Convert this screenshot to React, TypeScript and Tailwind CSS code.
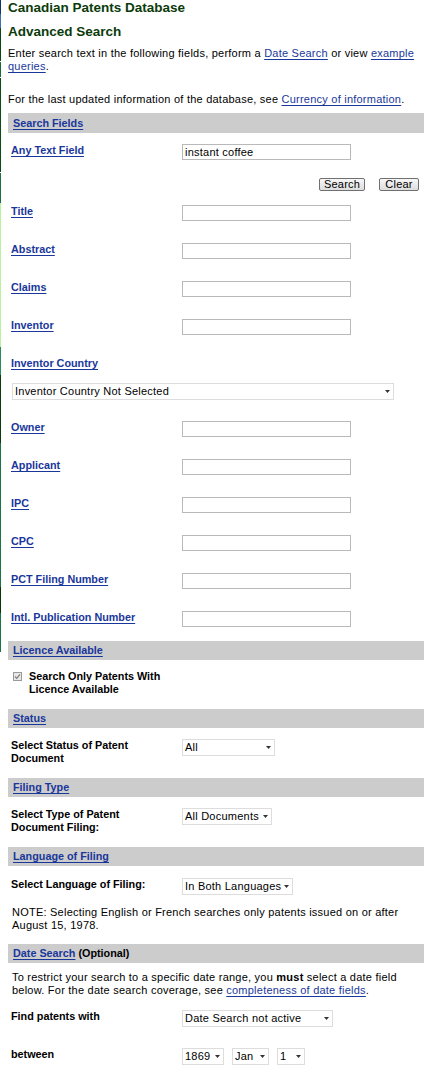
import type { ReactNode } from 'react';

const linkCls = 'text-[#19379b] underline underline-offset-[2px]';
const labelCls = 'text-[10.8px] leading-[13px] font-bold';
const bodyCls = 'text-[11px] leading-[13px] tracking-[0.23px]';

function Bar({ children, tall }: { children: ReactNode; tall?: boolean }) {
  return (
    <div
      className={`flex items-center bg-[#cccccc] pl-[5px] text-[10.8px] font-bold leading-[13px] ${
        tall ? 'h-[20px]' : 'h-[19px]'
      }`}
    >
      {children}
    </div>
  );
}

function Field({ label, h = 'h-[38px]', value }: { label: string; h?: string; value?: string }) {
  return (
    <div className={`flex items-start ${h}`}>
      <div className={`w-[174px] pl-[3px] ${labelCls}`}>
        <a href="#" className={linkCls}>
          {label}
        </a>
      </div>
      <div className={`flex h-[16px] w-[169px] items-center border border-[#b9b9b9] bg-white pl-[2px] ${bodyCls}`}>
        {value}
      </div>
    </div>
  );
}

function Select({ text, w }: { text: string; w: string }) {
  return (
    <div
      className={`flex h-[17px] ${w} items-center justify-between border border-[#dddddd] bg-white pl-[2px] pr-[3px] ${bodyCls}`}
    >
      <span className="whitespace-nowrap">{text}</span>
      <svg width="5" height="3" viewBox="0 0 5 3" className="shrink-0">
        <path d="M0 0h5L2.5 3z" fill="#333" />
      </svg>
    </div>
  );
}

function Stripe() {
  return (
    <div className="flex w-px shrink-0 flex-col">
      <div className="h-[14px] bg-[#0e3668]" />
      <div className="h-[14px] bg-[#3f6fa6]" />
      <div className="h-[33px] bg-[#0a4812]" />
      <div className="h-px bg-white" />
      <div className="h-[15px] bg-[#17683a]" />
      <div className="h-px bg-white" />
      <div className="h-[94px] bg-[#0b4a15]" />
      <div className="h-px bg-white" />
      <div className="h-[30px] bg-[#1b6e44]" />
      <div className="h-[144px] bg-[#b9f29a]" />
      <div className="h-[28px] bg-[#2b8a5a]" />
      <div className="h-[68px] bg-[#0a3d0c]" />
      <div className="h-[144px] bg-[#1a7448]" />
      <div className="h-[26px] bg-[#083408]" />
      <div className="h-[39px] bg-[#1a7448]" />
    </div>
  );
}

export default function App() {
  return (
    <div className="flex min-h-[1068px] w-[429px] bg-white font-['Liberation_Sans',Arial,sans-serif] text-black">
      <Stripe />
      <div className="w-[423px] pl-[7px]">
        <h1 className="text-[13.5px] font-bold leading-[16px] text-[#0b3b0b]">Canadian Patents Database</h1>
        <h2 className="mt-[8px] text-[13.5px] font-bold leading-[16px] text-[#0b3b0b]">Advanced Search</h2>
        <p className={`mt-[7px] ${bodyCls}`}>
          Enter search text in the following fields, perform a{' '}
          <a href="#" className={linkCls}>
            Date Search
          </a>{' '}
          or view{' '}
          <a href="#" className={linkCls}>
            example
            <br />
            queries
          </a>
          .
        </p>
        <p className={`mt-[20px] ${bodyCls}`}>
          For the last updated information of the database, see{' '}
          <a href="#" className={linkCls}>
            Currency of information
          </a>
          .
        </p>

        <div className="mt-[7px]">
          <Bar tall>
            <a href="#" className={linkCls}>
              Search Fields
            </a>
          </Bar>
        </div>

        <div className="pt-[11px]">
          <Field label="Any Text Field" h="h-[34px]" value="instant coffee" />
          <div className="flex h-[27px] items-start justify-end gap-[14px] pr-[5px]">
            <button className={`flex h-[13px] w-[46px] items-center justify-center rounded-[2px] border border-[#707070] bg-gradient-to-b from-[#f7f7f7] to-[#dddddd] ${bodyCls}`}>
              Search
            </button>
            <button className={`flex h-[13px] w-[40px] items-center justify-center rounded-[2px] border border-[#707070] bg-gradient-to-b from-[#f7f7f7] to-[#dddddd] ${bodyCls}`}>
              Clear
            </button>
          </div>
          <Field label="Title" />
          <Field label="Abstract" />
          <Field label="Claims" />
          <Field label="Inventor" />
          <div className={`h-[26px] pl-[3px] ${labelCls}`}>
            <a href="#" className={linkCls}>
              Inventor Country
            </a>
          </div>
          <div className="h-[38px] pl-[4px]">
            <Select text="Inventor Country Not Selected" w="w-[382px]" />
          </div>
          <Field label="Owner" />
          <Field label="Applicant" />
          <Field label="IPC" />
          <Field label="CPC" />
          <Field label="PCT Filing Number" />
          <Field label="Intl. Publication Number" h="h-[30px]" />
        </div>

        <Bar>
          <a href="#" className={linkCls}>
            Licence Available
          </a>
        </Bar>
        <div className="flex items-start gap-[7px] pb-[13px] pl-[5px] pt-[10px]">
          <svg width="9" height="9" viewBox="0 0 9 9" className="mt-[2px] shrink-0">
            <rect x="0.5" y="0.5" width="8" height="8" fill="#e8e8e8" stroke="#9a9a9a" />
            <path d="M2 4.5l1.8 1.8L7 2.3" fill="none" stroke="#7c7c7c" strokeWidth="1.2" />
          </svg>
          <div className={labelCls}>
            Search Only Patents With
            <br />
            Licence Available
          </div>
        </div>

        <Bar>
          <a href="#" className={linkCls}>
            Status
          </a>
        </Bar>
        <div className="flex items-start pb-[13px] pt-[11px]">
          <div className={`w-[174px] pl-[3px] ${labelCls}`}>
            Select Status of Patent
            <br />
            Document
          </div>
          <Select text="All" w="w-[93px]" />
        </div>

        <Bar>
          <a href="#" className={linkCls}>
            Filing Type
          </a>
        </Bar>
        <div className="flex items-start pb-[13px] pt-[11px]">
          <div className={`w-[174px] pl-[3px] ${labelCls}`}>
            Select Type of Patent
            <br />
            Document Filing:
          </div>
          <Select text="All Documents" w="w-[90px]" />
        </div>

        <Bar>
          <a href="#" className={linkCls}>
            Language of Filing
          </a>
        </Bar>
        <div className="pb-[12px] pt-[12px]">
          <div className="flex items-start">
            <div className={`w-[174px] pl-[3px] ${labelCls}`}>Select Language of Filing:</div>
            <Select text="In Both Languages" w="w-[111px]" />
          </div>
          <p className={`mt-[11px] pl-[4px] ${bodyCls}`}>
            NOTE: Selecting English or French searches only patents issued on or after
            <br />
            August 15, 1978.
          </p>
        </div>

        <Bar>
          <a href="#" className={linkCls}>
            Date Search
          </a>
          <span className="ml-[3px]">(Optional)</span>
        </Bar>
        <div className="pt-[8px]">
          <p className={`pl-[4px] ${bodyCls}`}>
            To restrict your search to a specific date range, you <b>must</b> select a date field
            <br />
            below. For the date search coverage, see{' '}
            <a href="#" className={linkCls}>
              completeness of date fields
            </a>
            .
          </p>
          <div className="mt-[13px] flex h-[38px] items-start">
            <div className={`w-[174px] pl-[3px] ${labelCls}`}>Find patents with</div>
            <Select text="Date Search not active" w="w-[151px]" />
          </div>
          <div className="flex items-start">
            <div className={`w-[174px] pl-[3px] ${labelCls}`}>between</div>
            <div className="flex gap-[8px]">
              <Select text="1869" w="w-[42px]" />
              <Select text="Jan" w="w-[37px]" />
              <Select text="1" w="w-[28px]" />
            </div>
          </div>
        </div>
      </div>
    </div>
  );
}
